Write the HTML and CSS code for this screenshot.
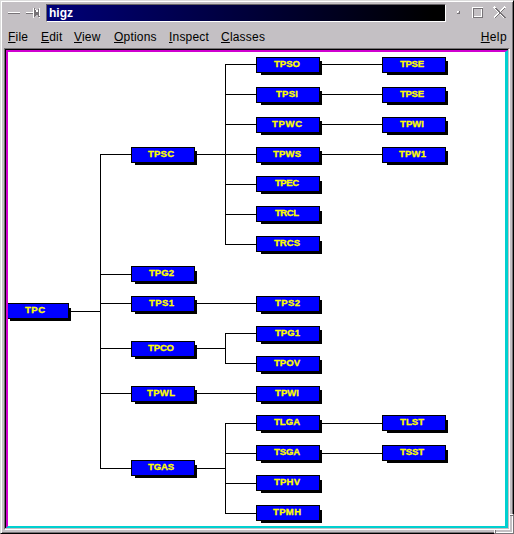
FILE: index.html
```html
<!DOCTYPE html>
<html lang="en">
<head>
<meta charset="utf-8">
<title>higz</title>
<link rel="stylesheet" href="styles.css">
</head>
<body>
<div class="window">
  <header class="titlebar">
    <svg class="left-icons" width="44" height="18" shape-rendering="crispEdges">
      <path d="M6 8h12v1H6z" fill="#fff"/><path d="M6 9h12v1H6z" fill="#777377"/>
      <path d="M24 8h7v1h-7zM31 4h1v10h-1zM33 5h1v1h-1zM34 6h2v2h-2zM37 4h1v10h-1z" fill="#fff"/>
      <path d="M24 9h7v1h-7zM32 4h1v9h-1zM33 6h1v6h-1zM34 8h2v3h-2zM36 5h1v8h-1zM37 12h1v1h-1z" fill="#777377"/>
    </svg>
    <h1 class="title">higz</h1>
    <svg class="right-icons" width="66" height="18" shape-rendering="crispEdges">
      <path d="M11 7h3v3h-3z" fill="#777377"/><path d="M11 7h2v1h-1v1h-1z" fill="#fff"/><path d="M12 8h1v1h-1z" fill="#c4c0c4"/>
      <path d="M26.500 14V3.500H37M28 12.500H35.500V5" fill="none" stroke="#fff"/>
      <path d="M27.500 13V4.500H36M27 13.500H36.500V4" fill="none" stroke="#777377"/>
      <path d="M48 3L59 14M48 14L59 3" stroke="#fff" stroke-width="2.500"/>
      <path d="M49 4L60 14M49 14L59 4" stroke="#777377" stroke-width="1.300"/>
    </svg>
  </header>
  <nav class="menubar">
    <span class="item file"><u>F</u>ile</span>
    <span class="item edit"><u>E</u>dit</span>
    <span class="item view"><u>V</u>iew</span>
    <span class="item options"><u>O</u>ptions</span>
    <span class="item inspect"><u>I</u>nspect</span>
    <span class="item classes"><u>C</u>lasses</span>
    <span class="item help"><u>H</u>elp</span>
  </nav>
  <main class="frame">
    <div class="canvas">
      <svg id="tree" width="497" height="474" viewBox="8 52 497 474"></svg>
    </div>
  </main>
  <div class="grip"></div>
</div>
<script src="tree.js"></script>
</body>
</html>
```
FILE: styles.css
```css
* { box-sizing: border-box; }
body { margin: 0; overflow: hidden; background: #c4c0c4; }

.window {
  position: relative;
  width: 514px;
  height: 534px;
  padding: 1px 0 0 1px;
  border: 1px solid #dcdcdc;
  border-right-color: #000;
  border-bottom-color: #000;
  background: #c4c0c4;
  box-shadow: inset 1px 1px #fff, inset -1px -1px #777377;
  font-family: "Liberation Sans", Arial, sans-serif;
  font-size: 12px;
  color: #000;
}

.titlebar {
  display: flex;
  height: 20px;
  padding-top: 2px;
}
.left-icons, .right-icons { flex: none; }
.title {
  flex: none;
  width: 400px;
  height: 18px;
  margin: 0;
  padding-left: 2px;
  border: 1px solid #666266;
  border-right-color: #fff;
  border-bottom-color: #fff;
  background: linear-gradient(to right, #000078, #000000 97%);
  color: #fff;
  font-size: 12px;
  font-weight: bold;
  line-height: 16px;
}

.menubar {
  display: flex;
  height: 26px;
  padding: 8px 6px 0;
  line-height: 14px;
}
.item { flex: none; white-space: nowrap; letter-spacing: 0.2px; }
.item u { text-decoration-thickness: 1px; text-underline-offset: 1px; }
.file { width: 33px; }
.edit { width: 33px; }
.view { width: 40px; }
.options { width: 55px; }
.inspect { width: 52px; }
.help { margin-left: auto; letter-spacing: 0.4px; }

.frame {
  width: 506px;
  height: 482px;
  margin-left: 2px;
  border: 1px solid #777377;
  border-right-color: #fff;
  border-bottom-color: #fff;
}
.canvas {
  width: 502px;
  height: 478px;
  margin: 1px 0 0 1px;
  border: 2px solid #d000d0;
  border-right: 3px solid #00d0d0;
  border-bottom-color: #00d0d0;
  background: #fff;
  outline: 1px solid #000;
  clip-path: inset(-1px 0 0 -1px);
}
.canvas svg { display: block; }

.grip {
  position: absolute;
  right: -1px;
  bottom: -1px;
  width: 20px;
  height: 20px;
  border-right: 1px solid #777377;
  border-bottom: 1px solid #777377;
  background:
    linear-gradient(#fff, #fff) 0 16px / 1px 4px no-repeat,
    linear-gradient(#777377, #777377) 1px 16px / 1px 4px no-repeat,
    linear-gradient(#fff, #fff) 16px 0 / 4px 1px no-repeat,
    linear-gradient(#777377, #777377) 16px 1px / 4px 1px no-repeat,
    linear-gradient(#fff, #fff) 18px 2px / 1px 17px no-repeat,
    linear-gradient(#fff, #fff) 2px 18px / 17px 1px no-repeat;
}

.shadow, .box-edge, .link { fill: #000; shape-rendering: crispEdges; }
.box { fill: #0000ff; shape-rendering: crispEdges; }
.label {
  fill: #ffff00;
  stroke: #ffff00;
  stroke-width: 0.3px;
  font-family: "Liberation Sans", Arial, sans-serif;
  font-size: 9.5px;
  font-weight: bold;
}
```
FILE: tree.js
```js
// name, x, y, line offset inside the box, label x, label width
const nodes = [
  ["TPC", 5, 303, 8, 25, 20],
  ["TPSC", 131, 147, 7, 148, 26],
  ["TPG2", 131, 266, 8, 149, 25],
  ["TPS1", 131, 296, 7, 149, 25],
  ["TPCO", 131, 341, 7, 148, 26],
  ["TPWL", 131, 386, 7, 147, 28],
  ["TGAS", 131, 460, 8, 148, 26],
  ["TPSO", 256, 57, 7, 274, 26],
  ["TPSI", 256, 87, 7, 276, 22],
  ["TPWC", 256, 117, 7, 272, 30],
  ["TPWS", 256, 147, 7, 273, 28],
  ["TPEC", 256, 176, 8, 275, 24],
  ["TRCL", 256, 206, 8, 275, 24],
  ["TRCS", 256, 236, 8, 274, 26],
  ["TPS2", 256, 296, 7, 275, 25],
  ["TPG1", 256, 326, 7, 275, 25],
  ["TPOV", 256, 356, 7, 274, 26],
  ["TPWI", 256, 386, 7, 275, 24],
  ["TLGA", 256, 415, 8, 274, 26],
  ["TSGA", 256, 445, 8, 274, 26],
  ["TPHV", 256, 475, 8, 274, 26],
  ["TPMH", 256, 505, 8, 273, 28],
  ["TPSE", 382, 57, 7, 400, 24],
  ["TPSE", 382, 87, 7, 400, 24],
  ["TPWI", 382, 117, 7, 400, 24],
  ["TPW1", 382, 147, 7, 399, 27],
  ["TLST", 382, 415, 8, 400, 24],
  ["TSST", 382, 445, 8, 400, 24]
];

// x, y, width, height
const links = [
  [71, 311, 30, 1], [100, 154, 1, 315], [225, 64, 1, 181],
  [225, 333, 1, 31], [225, 423, 1, 91],
  ...[154, 274, 303, 348, 393, 468].map(y => [100, y, 31, 1]),
  ...[154, 348, 468].map(y => [197, y, 29, 1]),
  ...[303, 393].map(y => [197, y, 59, 1]),
  ...[64, 94, 124, 154, 184, 214, 244, 333, 363, 423, 453, 483, 513].map(y => [225, y, 31, 1]),
  ...[64, 94, 124, 154, 423, 453].map(y => [322, y, 60, 1])
];

const rect = (cls, x, y, w, h) =>
  `<rect class="${cls}" x="${x}" y="${y}" width="${w}" height="${h}"/>`;

document.getElementById("tree").innerHTML =
  links.map(l => rect("link", ...l)).join("") +
  nodes.map(([name, x, y, mid, tx, tw]) => {
    const sx = x === 131 ? 4 : 5;
    const sy = mid - 3;
    return rect("shadow", x + sx, y + sy, 66 - sx, 18 - sy) +
      rect("box-edge", x, y, 64, 16) +
      rect("box", x + 1, y + 1, 62, 14) +
      `<text class="label" x="${tx}" y="${y + 10}" textLength="${tw}">${name}</text>`;
  }).join("");
```
